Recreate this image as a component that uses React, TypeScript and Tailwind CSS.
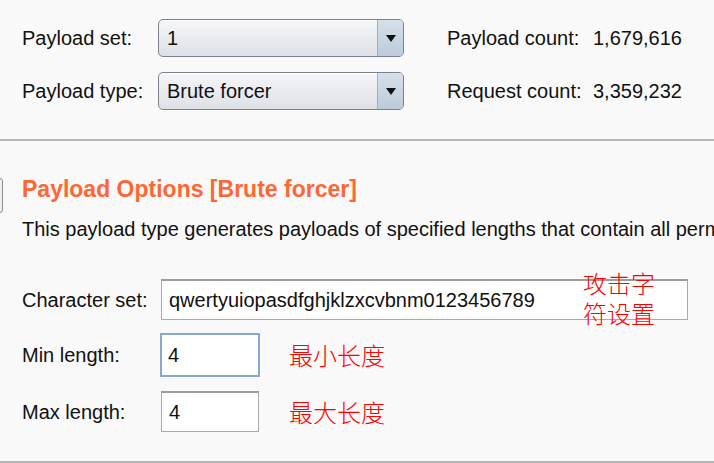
import React from "react";

function Select({ value }: { value: string }) {
  return (
    <div className="flex h-[38px] w-[246px] overflow-hidden rounded-[5px] border border-[#7c828c] bg-gradient-to-b from-[#f5f6f8] to-[#dde1e6] shadow-[inset_0_1px_0_#ffffff]">
      <div className="flex flex-1 items-center pl-[8px] text-[20px] text-[#111]">{value}</div>
      <div className="flex w-[26px] items-center justify-center border-l border-[#9fb0c2] bg-gradient-to-b from-[#d6e0ea] to-[#bccbda]">
        <svg width="10" height="7" viewBox="0 0 10 7">
          <path d="M0 0 L10 0 L5 7 Z" fill="#111" />
        </svg>
      </div>
    </div>
  );
}

function TextInput({ value, w, focused }: { value: string; w: string; focused?: boolean }) {
  return (
    <div
      className={
        focused
          ? "flex h-[44px] items-center border-2 border-[#87a9d1] bg-white pl-[6px] text-[20px] text-[#111] " + w
          : "flex h-[41px] items-center border border-[#a9a9a9] border-t-2 border-t-[#9c9c9c] bg-white pl-[7px] text-[20px] text-[#111] " + w
      }
    >
      {value}
    </div>
  );
}

export default function App() {
  return (
    <div
      className="relative h-[463px] w-[714px] overflow-hidden bg-[#f9f9f9] text-[#111]"
      style={{ fontFamily: '"Liberation Sans", Arial, sans-serif' }}
    >
      {/* top section */}
      <div className="flex pt-[19px] pb-[29px]">
        <div className="flex flex-col gap-[15px] pl-[22px]">
          <div className="flex items-center">
            <div className="w-[136px] text-[20px]">Payload set:</div>
            <Select value="1" />
          </div>
          <div className="flex items-center">
            <div className="w-[136px] text-[20px]">Payload type:</div>
            <Select value="Brute forcer" />
          </div>
        </div>
        <div className="ml-[43px] flex flex-col gap-[15px]">
          <div className="flex h-[38px] items-center text-[20px]">
            <span className="w-[146px]">Payload count:</span>
            <span>1,679,616</span>
          </div>
          <div className="flex h-[38px] items-center text-[20px]">
            <span className="w-[146px]">Request count:</span>
            <span>3,359,232</span>
          </div>
        </div>
      </div>
      <div className="h-[2px] bg-[#b5b7ba]" />

      {/* lower section */}
      <div className="relative pt-[36px]">
        <div className="absolute left-[-10px] top-[37px] h-[35px] w-[13px] rounded-[3px] border border-[#8d8f92] bg-[#eeeeee]" />
        <div className="flex h-[24px] items-center whitespace-nowrap pl-[22px] text-[23px] font-bold text-[#ff6633]">
          Payload Options [Brute forcer]
        </div>
        <div className="mt-[16px] flex h-[24px] w-[714px] items-center overflow-hidden whitespace-nowrap pl-[22px] text-[20px]">
          This payload type generates payloads of specified lengths that contain all permutations
        </div>

        <div className="mt-[38px] flex flex-col pl-[22px]">
          <div className="flex items-center">
            <div className="w-[139px] text-[20px]">Character set:</div>
            <TextInput value="qwertyuiopasdfghjklzxcvbnm0123456789" w="w-[527px]" />
          </div>
          <div className="mt-[13px] flex items-center">
            <div className="w-[138px] text-[20px]">Min length:</div>
            <TextInput value="4" w="w-[100px]" focused />
            <div
              className="ml-[29px] text-[24px] leading-none text-[#ff0000]"
              style={{ fontFamily: '"Noto Sans CJK SC", sans-serif', fontWeight: 300 }}
            >
              最小长度
            </div>
          </div>
          <div className="mt-[14px] flex items-center">
            <div className="w-[139px] text-[20px]">Max length:</div>
            <TextInput value="4" w="w-[98px]" />
            <div
              className="ml-[30px] text-[24px] leading-none text-[#ff0000]"
              style={{ fontFamily: '"Noto Sans CJK SC", sans-serif', fontWeight: 300 }}
            >
              最大长度
            </div>
          </div>
        </div>

        <div
          className="absolute left-[583px] top-[127px] w-[80px] text-[24px] leading-[30px] text-[#ff0000]"
          style={{ fontFamily: '"Noto Sans CJK SC", sans-serif', fontWeight: 300 }}
        >
          攻击字
          <br />
          符设置
        </div>
      </div>

      <div className="absolute bottom-0 left-0 h-[2px] w-full bg-[#b5b7ba]" />
    </div>
  );
}
